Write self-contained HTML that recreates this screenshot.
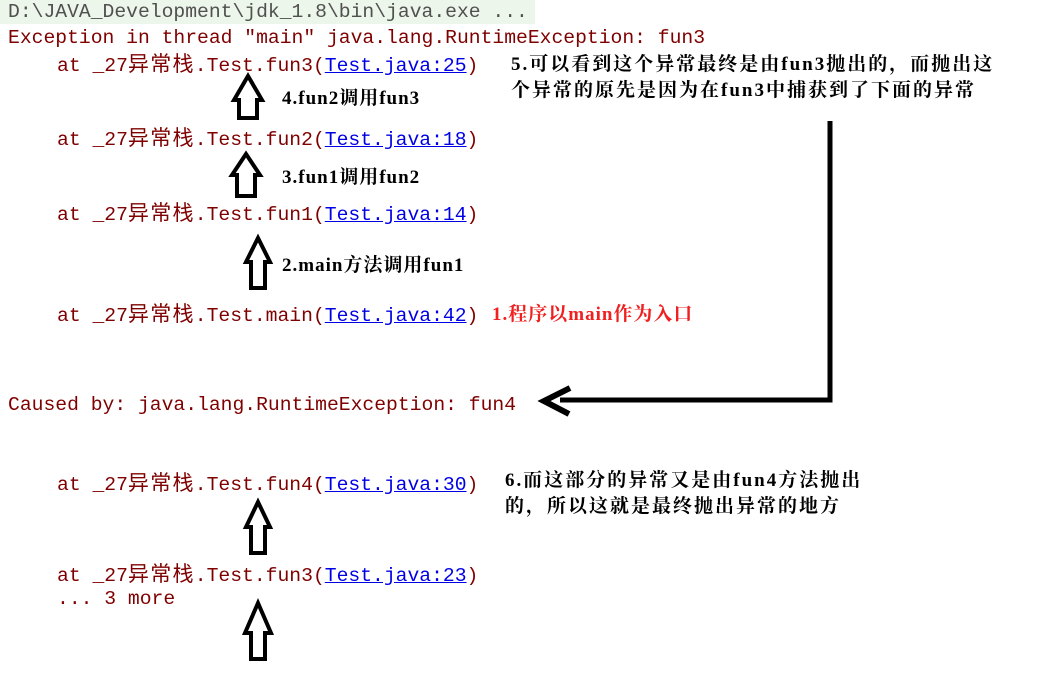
<!DOCTYPE html>
<html><head><meta charset="utf-8"><style>
body{margin:0;width:1043px;height:682px;background:#fff;position:relative;overflow:hidden}
.m{position:absolute;font-family:"Liberation Mono","Noto Sans CJK SC",monospace;font-size:19.7px;color:#7f0000;white-space:pre;line-height:22px}
.m .c{font-family:"Noto Sans CJK SC",sans-serif;font-size:21px;letter-spacing:1.3px}
.m a{color:#0000e6;text-decoration:underline}
.n{position:absolute;font-family:"Liberation Serif","Noto Serif CJK SC",serif;font-size:19px;letter-spacing:2px;color:#000;white-space:pre;line-height:26px;font-weight:bold}
</style></head><body>
<div style="position:absolute;left:0;top:0;width:535px;height:24px;background:#edf6ea"></div>
<div class="m" style="left:8px;top:1px;color:#505050">D:\JAVA_Development\jdk_1.8\bin\java.exe ...</div>
<div class="m" style="left:8px;top:27px">Exception in thread "main" java.lang.RuntimeException: fun3</div>
<div class="m" style="left:57px;top:52px">at _27<span class="c">异常栈</span>.Test.fun3(<a>Test.java:25</a>)</div>
<div class="m" style="left:57px;top:126px">at _27<span class="c">异常栈</span>.Test.fun2(<a>Test.java:18</a>)</div>
<div class="m" style="left:57px;top:201px">at _27<span class="c">异常栈</span>.Test.fun1(<a>Test.java:14</a>)</div>
<div class="m" style="left:57px;top:302px">at _27<span class="c">异常栈</span>.Test.main(<a>Test.java:42</a>)</div>
<div class="m" style="left:8px;top:394px">Caused by: java.lang.RuntimeException: fun4</div>
<div class="m" style="left:57px;top:471px">at _27<span class="c">异常栈</span>.Test.fun4(<a>Test.java:30</a>)</div>
<div class="m" style="left:57px;top:562px">at _27<span class="c">异常栈</span>.Test.fun3(<a>Test.java:23</a>)</div>
<div class="m" style="left:57px;top:588px">... 3 more</div>

<div class="n" style="left:282px;top:86px;letter-spacing:1px">4.fun2调用fun3</div>
<div class="n" style="left:282px;top:165px;letter-spacing:1px">3.fun1调用fun2</div>
<div class="n" style="left:282px;top:253px;letter-spacing:1px">2.main方法调用fun1</div>
<div class="n" style="left:492px;top:302px;color:#f02020;letter-spacing:1px">1.程序以main作为入口</div>
<div class="n" style="left:511px;top:52px">5.可以看到这个异常最终是由fun3抛出的，而抛出这
个异常的原先是因为在fun3中捕获到了下面的异常</div>
<div class="n" style="left:505px;top:468px">6.而这部分的异常又是由fun4方法抛出
的，所以这就是最终抛出异常的地方</div>

<svg width="1043" height="682" style="position:absolute;left:0;top:0" fill="none" stroke="#000" stroke-width="4" stroke-linejoin="miter">
<path d="M245 118 V100 H240 L254 76 L268 100 H263 V118 Z" transform="translate(-6,0)"/>
<path d="M243 196 V175 H238 L252 154 L266 175 H261 V196 Z" transform="translate(-6,0)"/>
<path d="M251 288 V262 H246 L258 238 L270 262 H265 V288 Z"/>
<path d="M251 553 V527 H246 L258 502 L270 527 H265 V553 Z"/>
<path d="M251 659 V633 H245 L258 603 L271 633 H265 V659 Z"/>
<path d="M830 121 V400 H560" stroke-width="5"/>
<path d="M570 388 L544 401 L569 414" stroke-width="6"/>
</svg>
</body></html>
